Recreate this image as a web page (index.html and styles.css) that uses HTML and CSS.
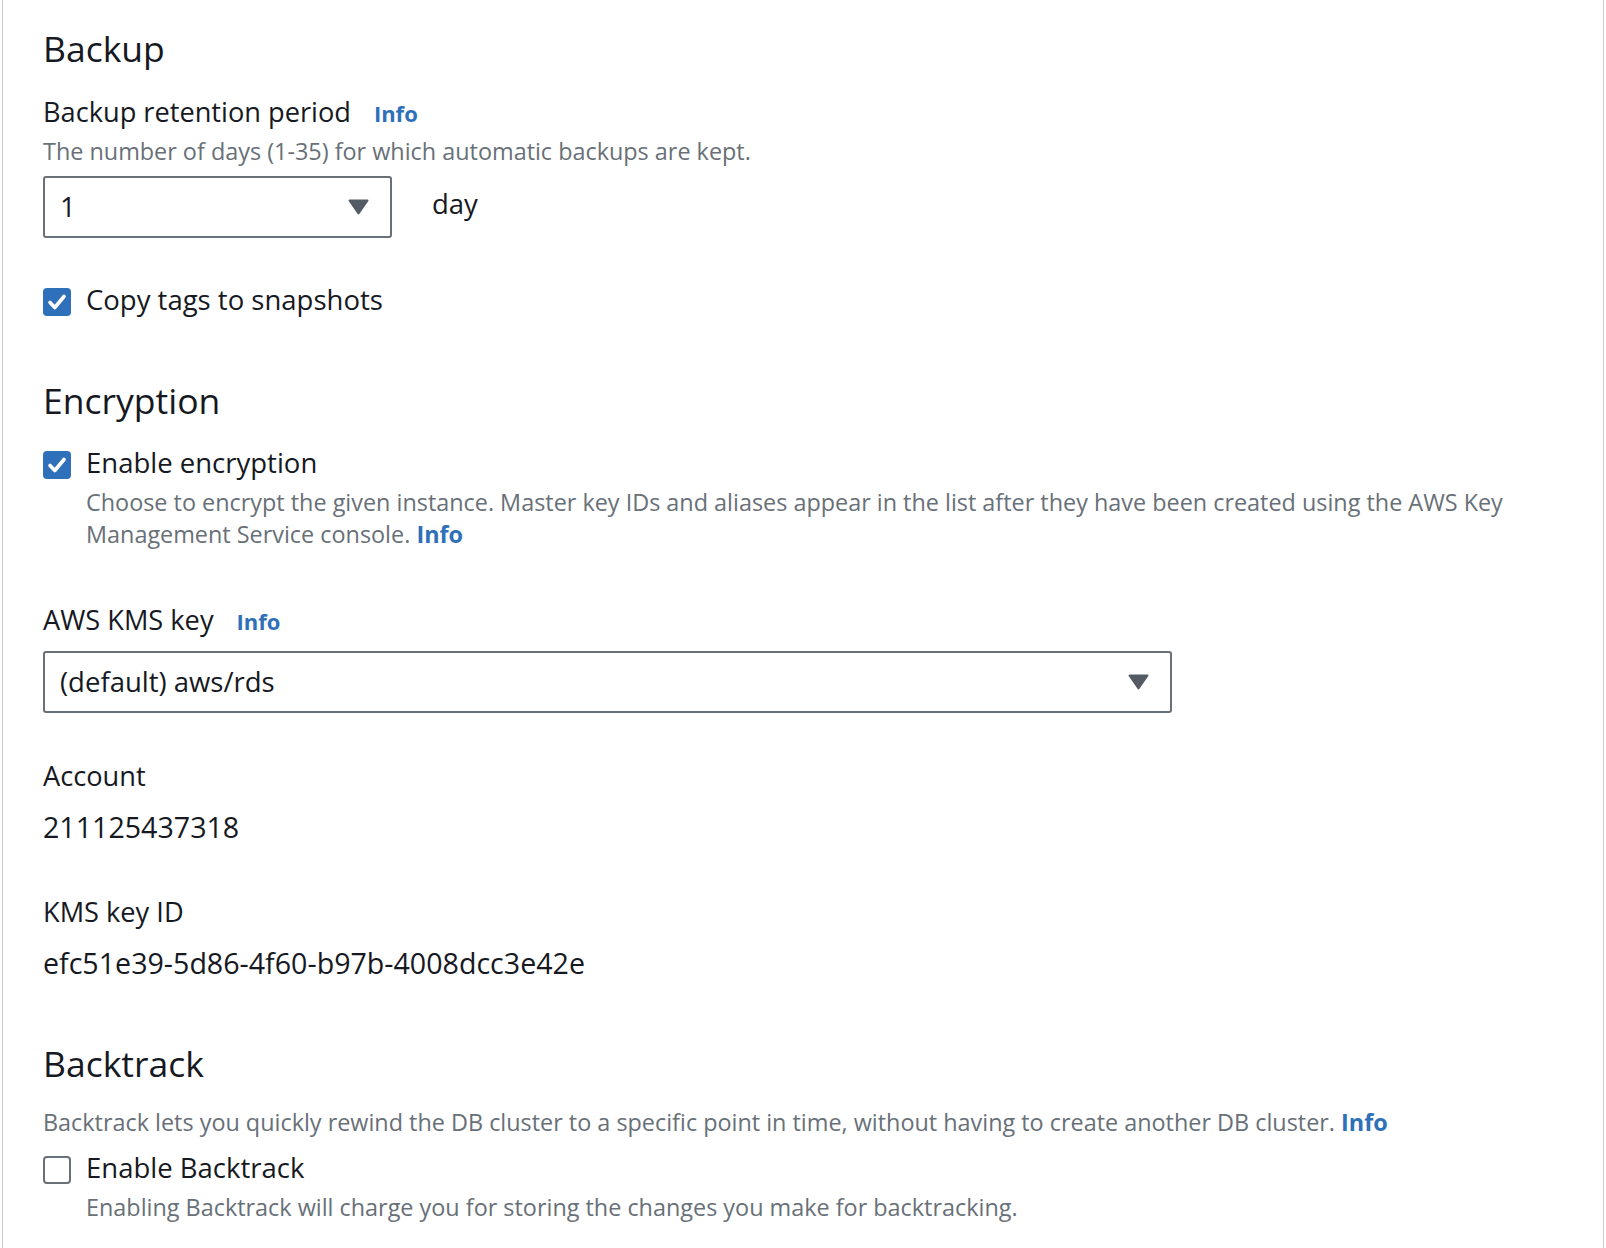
FILE: index.html
```html
<!DOCTYPE html>
<html lang="en">
<head>
<meta charset="utf-8">
<title>Backup, encryption and backtrack settings</title>
<link rel="stylesheet" href="styles.css">
</head>
<body>
<div class="panel">
  <section class="section section-backup">
    <h2 class="section-title">Backup</h2>
    <div class="field-label label-retention">Backup retention period<a class="info" href="#">Info</a></div>
    <div class="field-desc desc-retention">The number of days (1-35) for which automatic backups are kept.</div>
    <div class="retention-row">
      <div class="select select-short">
        <span class="select-value">1</span>
        <svg class="caret" width="21" height="16" viewBox="0 0 21 16" aria-hidden="true"><path d="M1.5 1.5 H19.5 L10.5 14.5 Z"/></svg>
      </div>
      <span class="unit">day</span>
    </div>
    <label class="checkbox-row row-copy-tags">
      <span class="checkbox is-checked"><svg width="28" height="28" viewBox="0 0 28 28" aria-hidden="true"><path d="M7 14.5 L11.8 19.5 L21 8.5"/></svg></span>
      <span class="checkbox-text">Copy tags to snapshots</span>
    </label>
  </section>

  <section class="section section-encryption">
    <h2 class="section-title">Encryption</h2>
    <label class="checkbox-row row-encryption">
      <span class="checkbox is-checked"><svg width="28" height="28" viewBox="0 0 28 28" aria-hidden="true"><path d="M7 14.5 L11.8 19.5 L21 8.5"/></svg></span>
      <span class="checkbox-text">Enable encryption</span>
    </label>
    <div class="checkbox-desc desc-encryption">Choose to encrypt the given instance. Master key IDs and aliases appear in the list after they have been created using the AWS Key Management Service console. <a class="info info-inline" href="#">Info</a></div>

    <div class="field-label label-kms">AWS KMS key<a class="info" href="#">Info</a></div>
    <div class="select select-wide">
      <span class="select-value">(default) aws/rds</span>
      <svg class="caret" width="21" height="16" viewBox="0 0 21 16" aria-hidden="true"><path d="M1.5 1.5 H19.5 L10.5 14.5 Z"/></svg>
    </div>

    <div class="field-label label-account">Account</div>
    <div class="field-value">211125437318</div>

    <div class="field-label label-keyid">KMS key ID</div>
    <div class="field-value">efc51e39-5d86-4f60-b97b-4008dcc3e42e</div>
  </section>

  <section class="section section-backtrack">
    <h2 class="section-title">Backtrack</h2>
    <div class="field-desc desc-backtrack">Backtrack lets you quickly rewind the DB cluster to a specific point in time, without having to create another DB cluster. <a class="info info-inline" href="#">Info</a></div>
    <label class="checkbox-row row-backtrack">
      <span class="checkbox"></span>
      <span class="checkbox-text">Enable Backtrack</span>
    </label>
    <div class="checkbox-desc desc-enable-backtrack">Enabling Backtrack will charge you for storing the changes you make for backtracking.</div>
  </section>
</div>
</body>
</html>
```

FILE: styles.css
```css
html, body {
  margin: 0;
  padding: 0;
  background: #ffffff;
}

body {
  font-family: "Open Sans", "Noto Sans", "Liberation Sans", Arial, sans-serif;
  color: #16191f;
}

.panel {
  box-sizing: border-box;
  width: 1602px;
  min-height: 100vh;
  margin-left: 2px;
  padding: 26px 40px 0 40px;
  border-left: 1px solid #c9cdd2;
  border-right: 1px solid #c9cdd2;
  background: #ffffff;
}

.section {
  display: flex;
  flex-direction: column;
  align-items: flex-start;
}

.section-encryption {
  margin-top: 60px;
}

.section-backtrack {
  margin-top: 60px;
}

.section-title {
  margin: 0;
  font-size: 35.5px;
  line-height: 44px;
  font-weight: 400;
  color: #16191f;
}

.field-label {
  font-size: 27.2px;
  line-height: 36px;
  color: #16191f;
}

.field-value {
  margin-top: 15px;
  font-size: 28.6px;
  line-height: 36px;
  color: #16191f;
}

.info {
  margin-left: 23px;
  font-size: 22px;
  line-height: 24px;
  font-weight: 700;
  color: #2e70b9;
  text-decoration: none;
}

.info-inline {
  margin-left: 0;
  font-size: 23.4px;
  line-height: 24px;
}

.field-desc,
.checkbox-desc {
  font-size: 23.4px;
  line-height: 32px;
  color: #687078;
}

.checkbox-desc {
  margin-left: 43px;
}

.label-retention {
  margin-top: 24px;
}

.desc-retention {
  margin-top: 5px;
}

.retention-row {
  display: flex;
  align-items: center;
  margin-top: 9px;
}

.unit {
  margin-left: 40px;
  margin-bottom: 7px;
  font-size: 27.5px;
  line-height: 36px;
}

.select {
  box-sizing: border-box;
  display: flex;
  align-items: center;
  justify-content: space-between;
  height: 62px;
  padding: 0 21px 0 15px;
  border: 2px solid #687078;
  border-radius: 3px;
  background: #ffffff;
}

.select-short {
  width: 349px;
}

.select-wide {
  width: 1129px;
  margin-top: 13px;
}

.select-value {
  font-size: 27.5px;
  line-height: 58px;
  color: #16191f;
}

.caret {
  display: block;
  flex: none;
}

.caret path {
  fill: #545b64;
  stroke: #545b64;
  stroke-width: 2;
  stroke-linejoin: round;
}

.checkbox-row {
  display: flex;
  align-items: flex-start;
  cursor: pointer;
}

.checkbox {
  box-sizing: border-box;
  flex: none;
  width: 28px;
  height: 28px;
  margin-top: 6px;
  border: 2px solid #687078;
  border-radius: 4px;
  background: #ffffff;
}

.checkbox.is-checked {
  border: none;
  background: #2e70b9;
}

.checkbox svg {
  display: block;
}

.checkbox svg path {
  fill: none;
  stroke: #ffffff;
  stroke-width: 3.6;
  stroke-linecap: round;
  stroke-linejoin: round;
}

.checkbox-text {
  margin-left: 15px;
  font-size: 27.5px;
  line-height: 36px;
  color: #16191f;
}

.row-copy-tags {
  margin-top: 44px;
}

.row-encryption {
  margin-top: 23px;
}

.desc-encryption {
  margin-top: 5px;
}

.label-kms {
  margin-top: 52px;
}

.label-account {
  margin-top: 45px;
}

.label-keyid {
  margin-top: 49px;
}

.desc-backtrack {
  margin-top: 21px;
}

.row-backtrack {
  margin-top: 12px;
}

.desc-enable-backtrack {
  margin-top: 5px;
}
```
